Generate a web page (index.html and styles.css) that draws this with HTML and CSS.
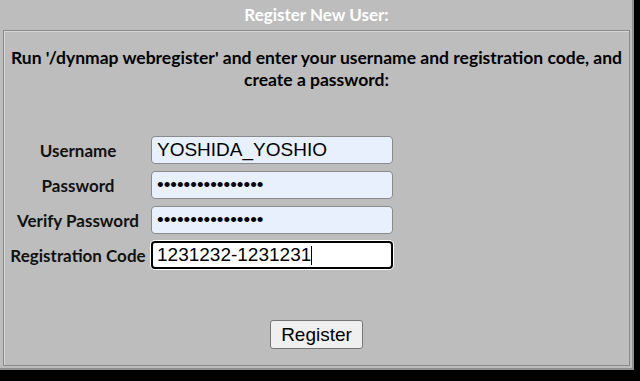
FILE: index.html
```html
<!DOCTYPE html>
<html lang="en">
<head>
    <meta charset="UTF-8">
    <meta name="viewport" content="width=device-width, initial-scale=1.0">
    <title>Register New User</title>
    <link rel="stylesheet" href="styles.css">
</head>
<body>
    <div class="page">
        <div class="title">Register New User:</div>
        <div class="box">
            <p class="intro">Run '/dynmap webregister' and enter your username and registration code, and create a password:</p>
            <form class="form">
                <div class="fields">
                    <label for="username">Username</label>
                    <input id="username" class="field filled" type="text" value="YOSHIDA_YOSHIO">
                    <label for="password">Password</label>
                    <input id="password" class="field filled" type="password" value="xxxxxxxxxxxxxxxx">
                    <label for="verify">Verify Password</label>
                    <input id="verify" class="field filled" type="password" value="xxxxxxxxxxxxxxxx">
                    <label for="code">Registration Code</label>
                    <span class="caret-wrap"><input id="code" class="field active" type="text" value="1231232-1231231"></span>
                </div>
                <div class="actions">
                    <button type="button" class="btn">Register</button>
                </div>
            </form>
        </div>
    </div>
</body>
</html>
```
FILE: styles.css
```css
html, body {
    margin: 0;
    padding: 0;
    background-color: #000;
}
.page {
    width: 634px;
    height: 370px;
    padding: 0 2px 2px 3px;
    box-sizing: border-box;
    background-color: #bdbdbd;
    border-right: 2px solid #8f8f8f;
    border-bottom: 2px solid #8f8f8f;
    display: flex;
    flex-direction: column;
    font-family: "Lato", "Open Sans", sans-serif;
}
.title {
    height: 30px;
    line-height: 29px;
    text-align: center;
    color: #fff;
    font-size: 17px;
    font-weight: bold;
}
.box {
    flex: 1;
    border: 1px solid #8a8a8a;
    box-shadow: inset 1px 1px 0 #d6d6d6;
    display: flex;
    flex-direction: column;
}
.intro {
    margin: 16px 4px 0;
    text-align: center;
    font-size: 17.5px;
    font-weight: bold;
    line-height: 22px;
    color: #000;
}
.form {
    flex: 1;
    display: flex;
    flex-direction: column;
}
.fields {
    margin-top: 45px;
    margin-left: 4px;
    display: grid;
    grid-template-columns: 140px 242px;
    column-gap: 3px;
    row-gap: 7px;
    align-items: center;
}
.fields label {
    text-align: center;
    font-size: 17px;
    font-weight: bold;
    color: #111;
}
.field {
    width: 242px;
    height: 28px;
    box-sizing: border-box;
    margin: 0;
    padding: 0 5px;
    font-family: "Liberation Sans", Arial, sans-serif;
    font-size: 19px;
    color: #000;
    border: 1px solid #8a8a8a;
    border-radius: 4px;
    outline: none;
}
.filled {
    background-color: #e8f0fe;
}
.active {
    background-color: #fff;
    border: 2px solid #000;
    box-shadow: 0 0 0 1px #fff;
    padding: 0 4px;
}
.caret-wrap {
    position: relative;
    display: block;
    height: 28px;
}
.caret-wrap::after {
    content: "";
    position: absolute;
    left: 160px;
    top: 5px;
    width: 1px;
    height: 19px;
    background-color: #000;
}
.actions {
    margin-top: auto;
    padding-bottom: 16px;
    text-align: center;
}
.btn {
    height: 29px;
    padding: 0 10px;
    font-family: "Liberation Sans", Arial, sans-serif;
    font-size: 19px;
    color: #000;
    background-color: #efefef;
    border: 1px solid #767676;
    border-radius: 3px;
}
```
